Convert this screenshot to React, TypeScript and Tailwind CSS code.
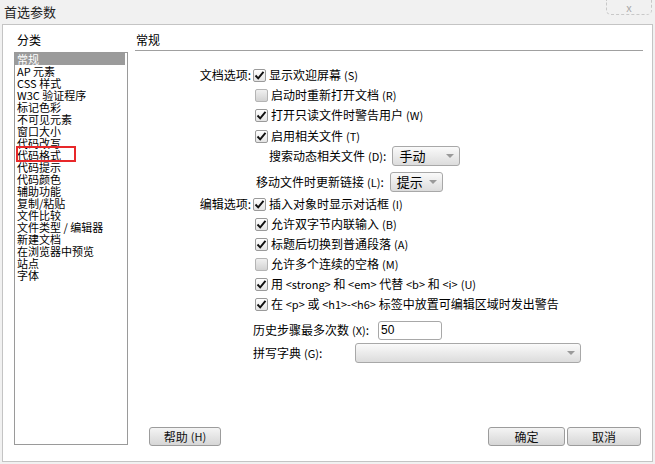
import React from "react";

const font = { fontFamily: '"Noto Sans CJK SC", "Liberation Sans", sans-serif' };

const categories = [
  "常规",
  "AP 元素",
  "CSS 样式",
  "W3C 验证程序",
  "标记色彩",
  "不可见元素",
  "窗口大小",
  "代码改写",
  "代码格式",
  "代码提示",
  "代码颜色",
  "辅助功能",
  "复制/粘贴",
  "文件比较",
  "文件类型 / 编辑器",
  "新建文档",
  "在浏览器中预览",
  "站点",
  "字体",
];

function Box({ checked }: { checked: boolean }) {
  return (
    <span
      className={`w-[13px] h-[13px] shrink-0 rounded-[2px] border flex items-center justify-center ${
        checked
          ? "border-[#9a9a9a] bg-gradient-to-b from-white to-[#e4e4e4]"
          : "border-[#b4b4b4] bg-gradient-to-b from-[#f0f0f0] to-[#d2d2d2]"
      }`}
    >
      {checked && (
        <svg width="11" height="11" viewBox="0 0 11 11">
          <path d="M1.5 5.5 L4.2 8.3 L9.5 1.8" fill="none" stroke="#111" strokeWidth="1.9" />
        </svg>
      )}
    </span>
  );
}

function Mn({ k }: { k: string }) {
  return <span className="text-[11px] ml-[3px]">({k})</span>;
}

function Check({ checked, children }: { checked: boolean; children: React.ReactNode }) {
  return (
    <div className="h-[20px] flex items-center">
      <span className="w-[120px] shrink-0" />
      <Box checked={checked} />
      <span className="ml-[3px] whitespace-nowrap">{children}</span>
    </div>
  );
}

function Drop({ w, text }: { w: string; text?: string }) {
  return (
    <div
      className={`${w} h-[20px] rounded-[3px] border border-[#a8a8a8] bg-gradient-to-b from-[#fafafa] to-[#dcdcdc] flex items-center pl-[6px] pr-[5px]`}
    >
      <span className="flex-1 text-[13px]">{text}</span>
      <svg width="8" height="5" viewBox="0 0 8 5">
        <path d="M0 0 H8 L4 4 Z" fill="#9a9a9a" />
      </svg>
    </div>
  );
}

function Btn({ w, children }: { w: string; children: React.ReactNode }) {
  return (
    <button
      className={`${w} h-[19px] rounded-[3px] border border-[#9c9c9c] bg-gradient-to-b from-[#f4f4f4] to-[#d6d6d6] text-[12px] leading-none flex items-center justify-center text-[#111]`}
    >
      {children}
    </button>
  );
}

export default function App() {
  return (
    <div className="w-[655px] h-[464px] bg-[#f1f1f1] relative text-[12px] text-black overflow-hidden" style={font}>
      {/* Title bar */}
      <div className="h-[24px] flex items-center pl-[4px] text-[13px] text-[#222]">首选参数</div>
      <div className="absolute right-[3px] top-0 w-[46px] h-[15px] border border-t-0 border-dashed border-[#c8c8c8] rounded-b-[5px] flex items-center justify-center text-[#aaa] text-[11px] leading-none">
        x
      </div>

      {/* Panel */}
      <div className="ml-[2px] w-[651px] h-[438px] border border-[#c4c4c4] bg-white flex">
        {/* Left column */}
        <div className="w-[125px] pl-[11px] pt-[7px] pb-[16px] flex flex-col">
          <div className="h-[16px] leading-[16px] pl-[3px]">分类</div>
          <div className="mt-[4px] w-[114px] flex-1 border border-[#9a9a9a] relative">
            {categories.map((c, i) => (
              <div
                key={c}
                className={`h-[12px] leading-[12px] text-[11px] pl-[2px] mr-[2px] whitespace-nowrap ${
                  i === 0 ? "bg-[#9b9b9b] text-white" : ""
                }`}
              >
                {c}
              </div>
            ))}
            <div className="absolute left-[1px] top-[93px] w-[60px] h-[16px] border-2 border-[#e8282a]" />
          </div>
        </div>

        {/* Right column */}
        <div className="flex-1 pl-[7px] pr-[9px] pt-[7px] pb-[15px] flex flex-col">
          <div className="h-[19px] leading-[16px] pl-[1px] border-b border-[#a0a0a0]">常规</div>

          <div className="mt-[14px]">
            <div className="h-[20px] flex items-center">
              <span className="w-[118px] shrink-0 text-right pr-[2px]">文档选项:</span>
              <Box checked />
              <span className="ml-[3px]">
                显示欢迎屏幕<Mn k="S" />
              </span>
            </div>
            <Check checked={false}>
              启动时重新打开文档<Mn k="R" />
            </Check>
            <Check checked>
              打开只读文件时警告用户<Mn k="W" />
            </Check>
            <div className="h-[1px]" />
            <Check checked>
              启用相关文件<Mn k="T" />
            </Check>
            <div className="h-[20px] flex items-center">
              <span className="w-[134px] shrink-0" />
              <span className="whitespace-nowrap">
                搜索动态相关文件<Mn k="D" />:
              </span>
              <span className="ml-[6px]">
                <Drop w="w-[68px]" text="手动" />
              </span>
            </div>
            <div className="h-[26px] flex items-end">
              <span className="w-[121px] shrink-0" />
              <span className="whitespace-nowrap h-[20px] flex items-center">
                移动文件时更新链接<Mn k="L" />:
              </span>
              <span className="ml-[6px]">
                <Drop w="w-[53px]" text="提示" />
              </span>
            </div>
          </div>

          <div className="mt-[2px]">
            <div className="h-[20px] flex items-center">
              <span className="w-[118px] shrink-0 text-right pr-[2px]">编辑选项:</span>
              <Box checked />
              <span className="ml-[3px]">
                插入对象时显示对话框<Mn k="I" />
              </span>
            </div>
            <Check checked>
              允许双字节内联输入<Mn k="B" />
            </Check>
            <Check checked>
              标题后切换到普通段落<Mn k="A" />
            </Check>
            <Check checked={false}>
              允许多个连续的空格<Mn k="M" />
            </Check>
            <Check checked>
              用 <span className="text-[11px]">&lt;strong&gt;</span> 和 <span className="text-[11px]">&lt;em&gt;</span> 代替{" "}
              <span className="text-[11px]">&lt;b&gt;</span> 和 <span className="text-[11px]">&lt;i&gt;</span>
              <Mn k="U" />
            </Check>
            <Check checked>
              在 <span className="text-[11px]">&lt;p&gt;</span> 或 <span className="text-[11px]">&lt;h1&gt;-&lt;h6&gt;</span>{" "}
              标签中放置可编辑区域时发出警告
            </Check>
          </div>

          <div className="mt-[6px] h-[20px] flex items-center">
            <span className="w-[118px] shrink-0" />
            <span className="whitespace-nowrap">
              历史步骤最多次数<Mn k="X" />:
            </span>
            <div className="ml-[9px] w-[64px] h-[19px] border border-[#a8a8a8] rounded-[3px] flex items-center pl-[2px] text-[12px]" style={{ fontFamily: '"Liberation Sans", sans-serif' }}>
              50
            </div>
          </div>
          <div className="mt-[3px] h-[20px] flex items-center">
            <span className="w-[118px] shrink-0" />
            <span className="w-[102px] whitespace-nowrap">
              拼写字典<Mn k="G" />:
            </span>
            <Drop w="w-[226px]" />
          </div>

          <div className="mt-auto flex items-center">
            <span className="w-[14px]" />
            <Btn w="w-[72px]">
              帮助<Mn k="H" />
            </Btn>
            <span className="flex-1" />
            <Btn w="w-[77px]">确定</Btn>
            <span className="w-[2px]" />
            <Btn w="w-[74px]">取消</Btn>
            <span className="w-[2px]" />
          </div>
        </div>
      </div>
    </div>
  );
}
